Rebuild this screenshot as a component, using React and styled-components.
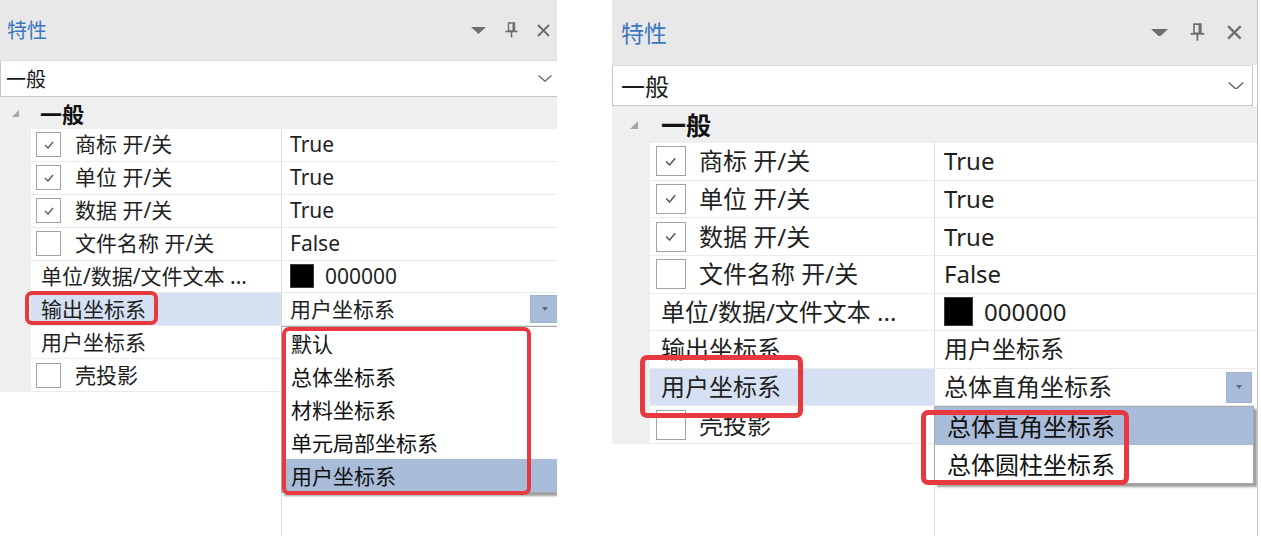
import React from "react";
import styled, { createGlobalStyle } from "styled-components";

const GlobalStyle = createGlobalStyle`
  html, body {
    margin: 0;
    padding: 0;
    background: #ffffff;
  }
  body {
    font-family: "Noto Sans", "Noto Sans CJK SC", sans-serif;
    color: #1f1f1f;
  }
`;

// sizes of the two screenshots (the right one is captured at a larger zoom)
const SMALL = {
  width: 557, head: 60, combo: 37, cat: 32, row: 32.875,
  font: 21, title: 20, comboFont: 20, catFont: 22,
  titleLeft: 7, iconGap: 19, iconRight: 7, icon: 1,
  comboExtend: -2, comboPadL: 5, comboPadR: 6,
  catPad: 12, expander: 7, catGap: 21,
  gutter: 31, labelW: 250, check: 25, checkLeft: 5, checkGap: 14, indent: 10,
  valuePad: 8, swatch: 24, swatchGap: 11,
  btnW: 29, btnH: 28, btnRight: -2,
  listPad: 9, listRight: -40, border: false,
};

const LARGE = {
  width: 645, head: 65, combo: 41, cat: 37, row: 37.625,
  font: 24, title: 23, comboFont: 24, catFont: 25,
  titleLeft: 9, iconGap: 22, iconRight: 15, icon: 1.14,
  comboExtend: 4, comboPadL: 8, comboPadR: 8,
  catPad: 18, expander: 8, catGap: 23,
  gutter: 38, labelW: 284, check: 30, checkLeft: 6, checkGap: 13, indent: 11,
  valuePad: 9, swatch: 29, swatchGap: 11,
  btnW: 26, btnH: 31, btnRight: 5,
  listPad: 12, listRight: 3, border: true,
};

const Page = styled.div`
  position: relative;
  display: flex;
  gap: 55px;
  height: 536px;
  width: 1261px;
  overflow: hidden;
`;

const Panel = styled.div`
  display: flex;
  flex-direction: column;
  flex: none;
  width: ${(p) => p.$m.width}px;
  height: 100%;
  overflow: hidden;
  border-right: ${(p) => (p.$m.border ? "1px solid #c4c4c4" : "none")};
`;

const Header = styled.div`
  display: flex;
  align-items: center;
  height: ${(p) => p.$m.head}px;
  padding: 0 ${(p) => p.$m.iconRight}px 0 ${(p) => p.$m.titleLeft}px;
  background: #e8e8e8;
  flex: none;
`;

const Title = styled.span`
  font-family: "Noto Sans CJK SC", sans-serif;
  font-size: ${(p) => p.$m.title}px;
  line-height: 1;
  color: #3a77c0;
`;

const HeaderIcons = styled.div`
  display: flex;
  align-items: center;
  gap: ${(p) => p.$m.iconGap}px;
  margin-left: auto;
`;

const Combo = styled.div`
  display: flex;
  align-items: center;
  box-sizing: border-box;
  height: ${(p) => p.$m.combo}px;
  margin-right: ${(p) => p.$m.comboExtend}px;
  padding: 0 ${(p) => p.$m.comboPadR}px 0 ${(p) => p.$m.comboPadL}px;
  background: #ffffff;
  border: 1px solid #c6c6c6;
  border-top-color: #dcdcdc;
  flex: none;
  font-family: "Noto Sans CJK SC", sans-serif;
  font-size: ${(p) => p.$m.comboFont}px;
  line-height: 1;
  color: #1a1a1a;

  svg {
    margin-left: auto;
  }
`;

const Category = styled.div`
  display: flex;
  align-items: center;
  gap: ${(p) => p.$m.catGap}px;
  height: ${(p) => p.$m.cat}px;
  padding-left: ${(p) => p.$m.catPad}px;
  background: #efefef;
  flex: none;
  font-family: "Noto Sans CJK SC", sans-serif;
  font-weight: 700;
  font-size: ${(p) => p.$m.catFont}px;
  line-height: 1;
  color: #111;
`;

const Row = styled.div`
  display: grid;
  grid-template-columns: ${(p) => p.$m.gutter}px ${(p) => p.$m.labelW}px 1fr;
  height: ${(p) => p.$m.row}px;
  flex: none;
  font-size: ${(p) => p.$m.font}px;
  line-height: 1;
`;

const Gutter = styled.div`
  background: #efefef;
`;

const Label = styled.div`
  display: flex;
  align-items: center;
  box-sizing: border-box;
  padding-left: ${(p) => (p.$boxed ? p.$m.checkLeft : p.$m.indent)}px;
  gap: ${(p) => p.$m.checkGap}px;
  background: ${(p) => (p.$selected ? "#d5e1f2" : "#ffffff")};
  border-bottom: 1px solid #ebebeb;
  white-space: nowrap;
  overflow: hidden;
`;

const Check = styled.span`
  display: flex;
  align-items: center;
  justify-content: center;
  box-sizing: border-box;
  width: ${(p) => p.$m.check}px;
  height: ${(p) => p.$m.check}px;
  flex: none;
  border: 1px solid #a3a3a3;
  background: #fff;
`;

const Value = styled.div`
  position: relative;
  display: flex;
  align-items: center;
  box-sizing: border-box;
  padding-left: ${(p) => p.$m.valuePad}px;
  gap: ${(p) => p.$m.swatchGap}px;
  background: #ffffff;
  border-left: 1px solid #dcdcdc;
  border-bottom: 1px solid #ebebeb;
  white-space: nowrap;
`;

const Swatch = styled.span`
  width: ${(p) => p.$m.swatch}px;
  height: ${(p) => p.$m.swatch}px;
  flex: none;
  background: #000;
  border: 1px solid #3a3a3a;
  box-sizing: border-box;
`;

const DropButton = styled.span`
  display: flex;
  align-items: center;
  justify-content: center;
  width: ${(p) => p.$m.btnW}px;
  height: ${(p) => p.$m.btnH}px;
  margin-left: auto;
  margin-right: ${(p) => p.$m.btnRight}px;
  flex: none;
  background: #a9bcd9;
  border: 1px solid #9fb2cf;
  box-sizing: border-box;
`;

const List = styled.ul`
  position: absolute;
  z-index: 2;
  top: calc(100% + 1px);
  left: -1px;
  right: ${(p) => p.$m.listRight}px;
  margin: 0;
  padding: 0;
  list-style: none;
  background: #ffffff;
  border: 1px solid #a8a8a8;
  box-shadow: 3px 3px 2px rgba(0, 0, 0, 0.38);
`;

const Option = styled.li`
  display: flex;
  align-items: center;
  height: ${(p) => p.$m.row}px;
  padding-left: ${(p) => p.$m.listPad}px;
  font-family: "Noto Sans CJK SC", sans-serif;
  background: ${(p) => (p.$active ? "#a9bcd9" : "transparent")};
  color: #111;
`;

const Filler = styled.div`
  display: grid;
  grid-template-columns: ${(p) => p.$m.gutter + p.$m.labelW}px 1fr;
  flex: 1;
`;

const FillerValue = styled.div`
  border-left: 1px solid #dcdcdc;
`;

const Mark = styled.div`
  position: absolute;
  z-index: 5;
  left: ${(p) => p.$x}px;
  top: ${(p) => p.$y}px;
  width: ${(p) => p.$w}px;
  height: ${(p) => p.$h}px;
  box-sizing: border-box;
  border: ${(p) => p.$t}px solid #e63940;
  border-radius: 7px;
  pointer-events: none;
`;

const DropTriangle = ({ k }) => (
  <svg width={15 * k} height={7 * k} viewBox="0 0 15 7">
    <path d="M0 0H15L7.5 7Z" fill="#6e6e6e" />
  </svg>
);

const PinIcon = ({ k }) => (
  <svg width={13 * k} height={16 * k} viewBox="0 0 13 16" fill="none" stroke="#6e6e6e">
    <path d="M3.5 1H9.5V9H3.5Z" strokeWidth="1.4" />
    <path d="M8.5 1V9" strokeWidth="2" />
    <path d="M0.5 9.5H12.5" strokeWidth="1.6" />
    <path d="M6.5 9.5V15.5" strokeWidth="1.6" />
  </svg>
);

const CloseIcon = ({ k }) => (
  <svg width={13 * k} height={13 * k} viewBox="0 0 13 13" fill="none" stroke="#6e6e6e" strokeWidth="2">
    <path d="M1 1L12 12M12 1L1 12" />
  </svg>
);

const Chevron = ({ k }) => (
  <svg width={14 * k} height={7 * k} viewBox="0 0 14 7" fill="none" stroke="#6a6a6a" strokeWidth="1.3">
    <polyline points="0.5,0.5 7,6.3 13.5,0.5" />
  </svg>
);

const Expander = ({ size }) => (
  <svg width={size} height={size} viewBox="0 0 7 7">
    <path d="M7 0V7H0Z" fill="#a6a6a6" />
  </svg>
);

const Tick = ({ k }) => (
  <svg width={10 * k} height={8 * k} viewBox="0 0 10 8" fill="none" stroke="#5c5c5c" strokeWidth="1.4">
    <polyline points="1,4 4,7 9,1" />
  </svg>
);

const SmallArrow = () => (
  <svg width="6" height="4" viewBox="0 0 6 4">
    <path d="M0 0H6L3 4Z" fill="#5b6b85" />
  </svg>
);

const baseRows = [
  { check: true, label: "商标 开/关", value: "True" },
  { check: true, label: "单位 开/关", value: "True" },
  { check: true, label: "数据 开/关", value: "True" },
  { check: false, label: "文件名称 开/关", value: "False" },
  { label: "单位/数据/文件文本 ...", color: "000000" },
];

const leftRows = [
  ...baseRows,
  {
    label: "输出坐标系",
    value: "用户坐标系",
    selected: true,
    options: ["默认", "总体坐标系", "材料坐标系", "单元局部坐标系", "用户坐标系"],
    active: 4,
  },
  { label: "用户坐标系", value: "" },
  { check: false, label: "壳投影", value: "" },
];

const rightRows = [
  ...baseRows,
  { label: "输出坐标系", value: "用户坐标系" },
  {
    label: "用户坐标系",
    value: "总体直角坐标系",
    selected: true,
    options: ["总体直角坐标系", "总体圆柱坐标系"],
    active: 0,
  },
  { check: false, label: "壳投影", value: "" },
];

function PropertyRow({ m, row }) {
  const boxed = row.check !== undefined;
  return (
    <Row $m={m}>
      <Gutter />
      <Label $m={m} $boxed={boxed} $selected={row.selected}>
        {boxed && <Check $m={m}>{row.check && <Tick k={m.icon} />}</Check>}
        <span>{row.label}</span>
      </Label>
      <Value $m={m}>
        {row.color && <Swatch $m={m} />}
        <span>{row.color || row.value}</span>
        {row.options && (
          <>
            <DropButton $m={m}>
              <SmallArrow />
            </DropButton>
            <List $m={m}>
              {row.options.map((o, i) => (
                <Option key={o} $m={m} $active={i === row.active}>
                  {o}
                </Option>
              ))}
            </List>
          </>
        )}
      </Value>
    </Row>
  );
}

function PropertiesPanel({ m, rows }) {
  return (
    <Panel $m={m}>
      <Header $m={m}>
        <Title $m={m}>特性</Title>
        <HeaderIcons $m={m}>
          <DropTriangle k={m.icon} />
          <PinIcon k={m.icon} />
          <CloseIcon k={m.icon} />
        </HeaderIcons>
      </Header>
      <Combo $m={m}>
        <span>一般</span>
        <Chevron k={m.icon} />
      </Combo>
      <Category $m={m}>
        <Expander size={m.expander} />
        <span>一般</span>
      </Category>
      {rows.map((r) => (
        <PropertyRow key={r.label} m={m} row={r} />
      ))}
      <Filler $m={m}>
        <div />
        <FillerValue />
      </Filler>
    </Panel>
  );
}

export default function App() {
  return (
    <>
      <GlobalStyle />
      <Page>
        <PropertiesPanel m={SMALL} rows={leftRows} />
        <PropertiesPanel m={LARGE} rows={rightRows} />
        <Mark $x={25} $y={291} $w={133} $h={34} $t={4} />
        <Mark $x={282} $y={327} $w={249} $h={168} $t={4} />
        <Mark $x={640} $y={355} $w={163} $h={63} $t={5} />
        <Mark $x={921} $y={410} $w={208} $h={75} $t={5} />
      </Page>
    </>
  );
}
